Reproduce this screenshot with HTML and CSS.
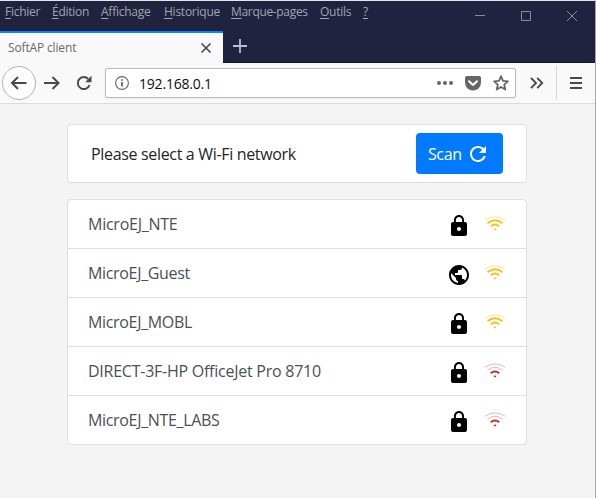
FILE: index.html
```html
<!DOCTYPE html>
<html lang="fr">
<head>
<meta charset="utf-8">
<title>SoftAP client</title>
<link rel="stylesheet" href="styles.css">
</head>
<body>
<svg class="defs" width="0" height="0">
  <symbol id="lock" viewBox="0 0 24 24"><path fill-rule="evenodd" d="M18 8h-1V6c0-2.760-2.240-5-5-5S7 3.240 7 6v2H6c-1.100 0-2 .9-2 2v10c0 1.100.9 2 2 2h12c1.100 0 2-.9 2-2V10c0-1.100-.9-2-2-2zm-6 9c-1.100 0-2-.9-2-2s.9-2 2-2 2 .9 2 2-.9 2-2 2zm3.100-9H8.900V6c0-1.710 1.390-3.100 3.100-3.100s3.100 1.390 3.100 3.100v2z"/></symbol>
  <symbol id="globe" viewBox="0 0 24 24"><path d="M12 2C6.480 2 2 6.480 2 12s4.480 10 10 10 10-4.480 10-10S17.520 2 12 2zm-1 17.930c-3.950-.49-7-3.850-7-7.930 0-.62.08-1.210.21-1.790L9 15v1c0 1.100.9 2 2 2v1.930zm6.900-2.540c-.26-.81-1-1.390-1.900-1.390h-1v-3c0-.55-.45-1-1-1H8v-2h2c.55 0 1-.45 1-1V7h2c1.100 0 2-.9 2-2v-.41c2.930 1.190 5 4.060 5 7.410 0 2.080-.8 3.970-2.100 5.390z"/></symbol>
  <symbol id="wifi" viewBox="0 0 22 16"><g fill="none" stroke="currentColor"><path class="arc-outer" d="M.7 4.300Q11-2.600 21.300 4.300"/><path class="arc-middle" d="M3.500 7.200Q11 1.300 18.500 7.200"/><path class="arc-inner" d="M6.800 10.200Q11 6.800 15.200 10.200"/></g><path fill="currentColor" d="M9.500 12.900Q11 11.900 12.500 12.900L11 14.700z"/></symbol>
</svg>
<div class="window">
  <header class="titlebar">
    <div class="menu-row">
      <nav class="menu">
        <span class="m1"><u>F</u>ichier</span><span class="m2"><u>É</u>dition</span><span class="m3"><u>A</u>ffichage</span><span class="m4"><u>H</u>istorique</span><span class="m5"><u>M</u>arque-pages</span><span class="m6"><u>O</u>utils</span><span><u>?</u></span>
      </nav>
      <svg class="controls" width="110" height="16" viewBox="0 0 110 16"><path d="M4 7.500h10M50.500 3.500h9v9h-9zM96 3l10 10M106 3L96 13" fill="none" stroke="#8c8d9c"/></svg>
    </div>
    <div class="tabs">
      <div class="tab"><span class="tab-title">SoftAP client</span>
        <svg width="12" height="12" viewBox="0 0 12 12"><path d="M1.500 1.500l9 9M10.500 1.500l-9 9" stroke="#4c4c4e" stroke-width="1.700"/></svg>
      </div>
      <svg class="new-tab" width="14" height="14" viewBox="0 0 14 14"><path d="M7 0v14M0 7h14" stroke="#bdbdc6" stroke-width="1.800"/></svg>
    </div>
  </header>
  <div class="toolbar">
    <div class="back"><svg width="18" height="16" viewBox="0 0 18 16"><path d="M16.500 8H2M8 2L2 8l6 6" fill="none" stroke="#4a4a4c" stroke-width="2"/></svg></div>
    <svg class="forward" width="18" height="16" viewBox="0 0 18 16"><path d="M1 8h14.500M9.500 2l6 6-6 6" fill="none" stroke="#4a4a4c" stroke-width="2"/></svg>
    <svg class="reload" width="16" height="16" viewBox="0 0 16 16"><path d="M12.200 4A6 6 0 1 0 13.500 10" fill="none" stroke="#4a4a4c" stroke-width="2"/><path d="M15.500.8v6.400H9.200z" fill="#4a4a4c"/></svg>
    <div class="address">
      <svg width="14" height="14" viewBox="0 0 14 14"><circle cx="7" cy="7" r="6.400" fill="none" stroke="#666" stroke-width="1.100"/><path d="M7 6v4.500M7 3.300v1.500" stroke="#555" stroke-width="1.600"/></svg>
      <span class="url">192.168.0.1</span>
      <svg class="dots" width="16" height="6" viewBox="0 0 16 6"><g fill="#666"><circle cx="2" cy="3" r="2"/><circle cx="8" cy="3" r="2"/><circle cx="14" cy="3" r="2"/></g></svg>
      <svg class="pocket" width="16" height="15" viewBox="0 0 16 15"><path d="M2 0h12q2 0 2 2v4.500a8 8 0 0 1-16 0V2q0-2 2-2z" fill="#666"/><path d="M4 5.200l4 3.800 4-3.800" fill="none" stroke="#fff" stroke-width="2" stroke-linecap="round" stroke-linejoin="round"/></svg>
      <svg class="star" width="16" height="16" viewBox="0 0 16 16"><path d="M8 1.300l2 4.500 4.900.5-3.700 3.300 1.100 4.900L8 12l-4.300 2.500 1.100-4.900L1.100 6.300 6 5.800z" fill="none" stroke="#666" stroke-width="1.800" stroke-linejoin="round"/></svg>
    </div>
    <svg class="more" width="14" height="12" viewBox="0 0 14 12"><path d="M1 .8L6 6l-5 5.200M7.200.8l5 5.200-5 5.200" fill="none" stroke="#4a4a4c" stroke-width="1.900"/></svg>
    <div class="burger"><svg width="12" height="12" viewBox="0 0 12 12"><path d="M0 1h12M0 6h12M0 11h12" stroke="#4a4a4c" stroke-width="2"/></svg></div>
  </div>
  <main>
    <section class="card prompt"><span class="prompt-text">Please select a Wi-Fi network</span>
      <button><span>Scan</span><svg width="24" height="24" viewBox="0 0 24 24"><path fill="#fff" d="M17.650 6.350C16.200 4.900 14.210 4 12 4c-4.420 0-7.990 3.580-7.990 8s3.570 8 7.990 8c3.730 0 6.840-2.550 7.730-6h-2.080c-.82 2.330-3.040 4-5.650 4-3.310 0-6-2.690-6-6s2.690-6 6-6c1.660 0 3.140.69 4.220 1.780L13 11h7V4l-2.350 2.350z"/></svg></button>
    </section>
    <ul class="card networks">
      <li><span class="n1">MicroEJ_NTE</span><svg class="security"><use href="#lock"/></svg><svg class="signal medium"><use href="#wifi"/></svg></li>
      <li><span class="n2">MicroEJ_Guest</span><svg class="security"><use href="#globe"/></svg><svg class="signal medium"><use href="#wifi"/></svg></li>
      <li><span class="n3">MicroEJ_MOBL</span><svg class="security"><use href="#lock"/></svg><svg class="signal medium"><use href="#wifi"/></svg></li>
      <li><span class="n4">DIRECT-3F-HP OfficeJet Pro 8710</span><svg class="security"><use href="#lock"/></svg><svg class="signal weak"><use href="#wifi"/></svg></li>
      <li><span class="n5">MicroEJ_NTE_LABS</span><svg class="security"><use href="#lock"/></svg><svg class="signal weak"><use href="#wifi"/></svg></li>
    </ul>
  </main>
</div>
</body>
</html>
```
FILE: styles.css
```css
* { box-sizing: border-box; }
body { margin: 0; font-family: "Open Sans", "Noto Sans", sans-serif; }
svg { display: block; flex: none; }
.defs { position: absolute; }
.window { width: 596px; height: 498px; overflow: hidden; background: #f4f4f4; border-top: 1px solid #e2e9e7; border-right: 1px solid #a5a5a5; }
.titlebar { height: 62px; background: #20233f; border-bottom: 1px solid #11142b; }
.menu-row { height: 30px; display: flex; justify-content: space-between; }
.menu { display: flex; padding: 2px 0 0 5px; font-size: 12px; line-height: 18px; color: #a3a4ac; white-space: nowrap; letter-spacing: -.25px; }
.menu u { text-underline-offset: 2px; }
.m1 { width: 47px; }
.m2 { width: 49px; }
.m3 { width: 63px; }
.m4 { width: 67px; }
.m5 { width: 89px; letter-spacing: -.33px; }
.m6 { width: 43px; }
.controls { margin: 7px 14px 0 0; }
.tabs { display: flex; height: 32px; }
.tab { width: 223px; display: flex; align-items: center; justify-content: space-between; padding: 0 11px 0 8px; background: #f9f9fa; border-top: 2px solid #0a84ff; font-size: 12px; color: #69696d; }
.tab-title { letter-spacing: -.15px; margin-top: -1px; }
.new-tab { margin: 8px 0 0 10px; }
.toolbar { height: 41px; display: flex; align-items: center; background: #f9f9fa; border-bottom: 1px solid #dcdcdd; padding-left: 2px; }
.back { width: 34px; height: 34px; border: 1px solid #b3b3b3; border-radius: 50%; background: #fff; display: flex; align-items: center; justify-content: center; }
.forward { margin-left: 7px; }
.reload { margin-left: 15px; }
.address { margin-left: 13px; width: 411px; height: 30px; border: 1px solid #bababb; border-radius: 2px; background: #fff; display: flex; align-items: center; padding: 0 6px 0 9px; box-shadow: 0 1px 3px #0000000d; }
.url { margin: 1px auto 0 10px; font-size: 14px; color: #0c0c0d; letter-spacing: -.2px; }
.pocket { margin-left: 12px; }
.star { margin-left: 12px; }
.more { margin-left: 14px; }
.burger { height: 34px; margin-left: 12px; padding-left: 13px; border-left: 1px solid #d9d9da; display: flex; align-items: center; }
main { padding: 20px 0 0 67px; }
.card { width: 460px; margin: 0; background: #fff; border: 1px solid #dfdfdf; border-radius: 4px; }
.prompt { height: 59px; display: flex; align-items: center; justify-content: space-between; padding: 0 23px; font-size: 16px; color: #212529; }
.prompt-text { letter-spacing: -.33px; margin-top: 1px; }
button { width: 87px; height: 41px; border: 0; border-radius: 4px; background: #007bff; color: #fff; font: 16px "Open Sans", sans-serif; letter-spacing: -.4px; display: flex; align-items: center; padding: 0 13px 0 12px; justify-content: space-between; }
.networks { margin-top: 16px; padding: 0; list-style: none; }
.networks li { height: 49px; display: flex; align-items: center; padding: 0 20px; font-size: 16px; color: #495057; letter-spacing: -.25px; white-space: nowrap; }
.networks li + li { border-top: 1px solid #dfdfdf; }
.networks li:first-child { height: 48px; }
.networks .n2, .networks .n3, .networks .n5 { letter-spacing: -.33px; }
.security { width: 24px; height: 24px; margin: 4px 13px 0 auto; }
.signal { width: 22px; height: 16px; }
.medium { color: #edc51b; --outer: .45; --middle: 1; --middle-width: 1.8px; }
.weak { color: #c22d15; --outer: .35; --middle: .35; --middle-width: 1px; }
.arc-outer { opacity: var(--outer); stroke-width: 1px; }
.arc-middle { opacity: var(--middle); stroke-width: var(--middle-width); }
.arc-inner { stroke-width: 1.9px; }
```
